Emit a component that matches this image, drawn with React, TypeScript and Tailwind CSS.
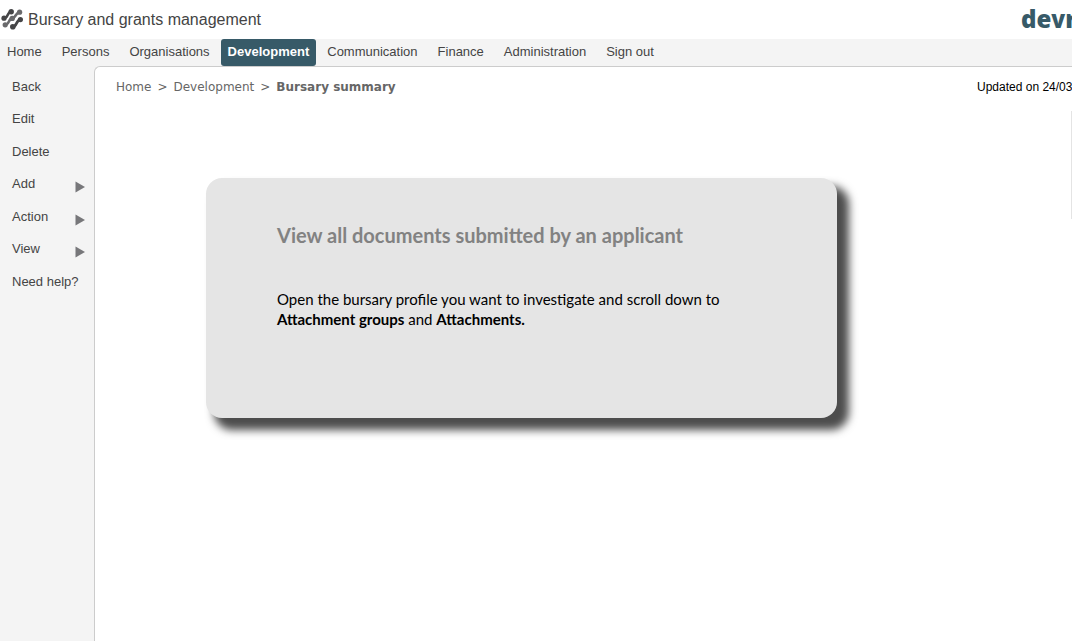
const navItems = [
  'Home',
  'Persons',
  'Organisations',
  'Development',
  'Communication',
  'Finance',
  'Administration',
  'Sign out',
];

const sideItems = [
  { label: 'Back', menu: false },
  { label: 'Edit', menu: false },
  { label: 'Delete', menu: false },
  { label: 'Add', menu: true },
  { label: 'Action', menu: true },
  { label: 'View', menu: true },
  { label: 'Need help?', menu: false },
];

function AppMark() {
  return (
    <svg viewBox="0 0 22 22" className="size-[22px] shrink-0" aria-hidden="true">
      <g fill="#454547">
        <path d="M3 9.2 C7 9.6 6 3 10.2 2.8" fill="none" stroke="#454547" strokeWidth="2.6" />
        <circle cx="3" cy="9.2" r="2.6" />
        <circle cx="10.2" cy="2.8" r="2.7" />
        <path d="M11.6 18 C16 18 15 10.4 20 10.4" fill="none" stroke="#454547" strokeWidth="2.8" />
        <circle cx="11.8" cy="17.8" r="2.8" />
        <circle cx="19.4" cy="10.6" r="2.6" />
      </g>
      <g fill="#6a6a6c">
        <path
          d="M4.2 15.8 C8.4 15.8 7.4 9.4 11.2 9.2 C15.2 9 14.4 3.4 18.6 3.2"
          fill="none"
          stroke="#6a6a6c"
          strokeWidth="2.6"
        />
        <circle cx="4.2" cy="15.8" r="2.6" />
        <circle cx="11.2" cy="9.4" r="2.7" />
        <circle cx="18.6" cy="3.2" r="2.6" />
      </g>
    </svg>
  );
}

export default function App() {
  return (
    <div className="flex min-h-screen flex-col overflow-hidden bg-white font-['Liberation_Sans',Arial,sans-serif] text-[13px] text-[#444]">
      <header className="flex h-[39px] items-center justify-between pl-px">
        <div className="flex items-center gap-[5px]">
          <AppMark />
          <h1 className="text-base">Bursary and grants management</h1>
        </div>
        <div className="h-[38px] w-[51px] overflow-hidden font-['Open_Sans',sans-serif] text-2xl leading-[35px] font-extrabold whitespace-nowrap text-[#375a68]">
          de<span className="text-xl">V</span>r
        </div>
      </header>

      <nav className="flex h-[27px] bg-[#f4f4f4]" aria-label="Main">
        <ul className="-ml-0.5 flex gap-0.5">
          {navItems.map((item) => (
            <li key={item}>
              <a
                href="#"
                className={
                  item === 'Development'
                    ? 'block h-[27px] rounded-[3px] bg-[#375a68] px-[7px] leading-[26px] font-bold text-white'
                    : 'block h-[27px] px-[9px] leading-[26px]'
                }
              >
                {item}
              </a>
            </li>
          ))}
        </ul>
      </nav>

      <div className="flex grow bg-[#f4f4f4]">
        <aside className="w-[94px] shrink-0 pt-1">
          <ul className="grid h-[228px] grid-rows-7">
            {sideItems.map(({ label, menu }) => (
              <li key={label} className="flex">
                {menu ? (
                  <button type="button" className="flex grow items-center justify-between pr-[9px] pl-3">
                    {label}
                    <svg viewBox="0 0 10 12" className="mt-1.5 h-3 w-2.5" aria-hidden="true">
                      <path d="M0.5 0.5 L10 6 L0.5 11.5 Z" fill="#77777a" />
                    </svg>
                  </button>
                ) : (
                  <a href="#" className="flex grow items-center pl-3">
                    {label}
                  </a>
                )}
              </li>
            ))}
          </ul>
        </aside>

        <main className="min-w-0 grow rounded-tl-md border-t border-l border-[#ccc] bg-white">
          <div className="flex h-10 items-center justify-between pl-[21px]">
            <nav
              className="flex gap-1.5 font-['DejaVu_Sans',Verdana,sans-serif] text-xs text-[#666]"
              aria-label="Breadcrumb"
            >
              <a href="#">Home</a>
              <span>&gt;</span>
              <a href="#">Development</a>
              <span>&gt;</span>
              <strong>Bursary summary</strong>
            </nav>
            <p className="w-[95px] overflow-hidden text-xs whitespace-nowrap text-black">Updated on 24/03</p>
          </div>

          <div className="flex items-start justify-between pt-1">
            <section className="mt-[67px] ml-[111px] min-h-60 w-full max-w-[631px] rounded-[16px] bg-[#e5e5e5] px-[71px] pt-[43px] font-['Lato',Carlito,Calibri,sans-serif] shadow-[10px_10px_9px_2px_#4d4d4d]">
              <h2 className="text-xl leading-7 font-bold text-[#828282]">
                View all documents submitted by an applicant
              </h2>
              <p className="mt-10 text-[15px] leading-5 text-black">
                Open the bursary profile you want to investigate and scroll down to
                <br />
                <strong>Attachment groups</strong> and <strong>Attachments.</strong>
              </p>
            </section>
            <div className="h-[108px] w-px bg-[#e4e4e4]" />
          </div>
        </main>
      </div>
    </div>
  );
}
